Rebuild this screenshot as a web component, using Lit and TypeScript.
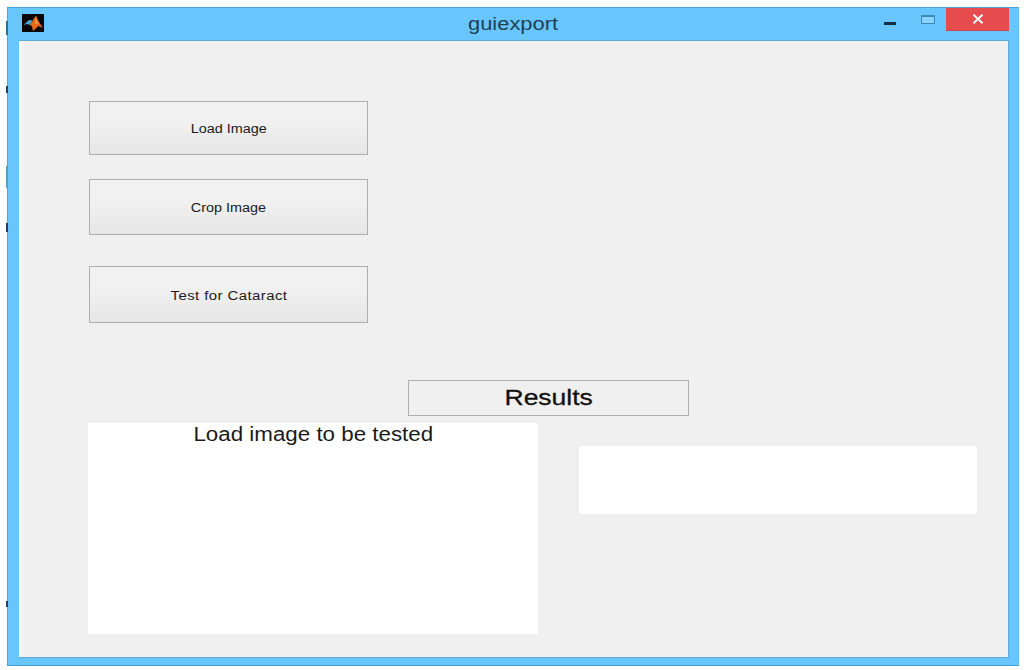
import { LitElement, html, css } from "lit";
import { customElement } from "lit/decorators.js";

@customElement("app-root")
export class AppRoot extends LitElement {
  static styles = css`
    :host {
      display: block;
      width: 1024px;
      height: 670px;
      background: #fff;
      font-family: "Liberation Sans", Arial, sans-serif;
      overflow: hidden;
    }
    .frame {
      box-sizing: border-box;
      width: 1012px;
      height: 659px;
      margin: 7px 0 0 7px;
      background: #69c6fd;
      border: 1px solid #4aa3d6;
      border-left-color: #6d9db8;
      border-right-color: #63bdf3;
      display: flex;
      flex-direction: column;
      position: relative;
    }
    .ticks {
      position: absolute;
      left: -2px;
      top: 0;
      width: 2px;
      height: 600px;
      background: linear-gradient(
        to bottom,
        transparent 13px,
        #2f6c94 13px,
        #2f6c94 27px,
        transparent 27px,
        transparent 78px,
        #2c3a66 78px,
        #2c3a66 85px,
        transparent 85px,
        transparent 158px,
        #5b9cc4 158px,
        #5b9cc4 180px,
        transparent 180px,
        transparent 215px,
        #2c3a66 215px,
        #2c3a66 224px,
        transparent 224px,
        transparent 593px,
        #2c3a66 593px,
        #2c3a66 599px,
        transparent 599px
      );
    }
    .titlebar {
      height: 32px;
      flex: none;
      display: flex;
      align-items: flex-start;
      position: relative;
    }
    .logo {
      width: 22px;
      height: 18px;
      margin: 6px 0 0 14px;
      display: block;
      flex: none;
    }
    .title {
      position: absolute;
      left: 0;
      right: 0;
      top: 6px;
      text-align: center;
      font-size: 18px;
      line-height: 20px;
      color: #1d3f55;
    }
    .wide {
      display: inline-block;
      transform-origin: center;
      transform: scaleX(var(--sx, 1.2));
    }
    .title .wide { --sx: 1.215; }
    .controls {
      margin-left: auto;
      margin-right: 9px;
      display: flex;
      align-items: flex-start;
    }
    .min {
      width: 12px;
      height: 3px;
      background: #12304a;
      margin: 14px 25px 0 0;
    }
    .max {
      box-sizing: border-box;
      width: 14px;
      height: 9px;
      border: 1px solid #3d87b5;
      border-top-width: 2px;
      background: #8ad3fd;
      margin: 7px 11px 0 0;
    }
    .close {
      width: 63px;
      height: 22px;
      background: #e64b4d;
      border-bottom: 1px solid #c24a50;
      display: flex;
      align-items: center;
      justify-content: center;
    }
    .close svg {
      display: block;
      width: 14px;
      height: 10px;
    }
    .client {
      box-sizing: border-box;
      width: 990px;
      height: 618px;
      margin-left: 11px;
      background: #f0f0f0;
      border: 1px solid #5fa9d8;
      border-width: 1px 1px 1px 0;
      box-shadow: inset 4px 0 3px -1px #f8f8f8;
      padding: 60px 0 0 70px;
      display: flex;
      flex-direction: column;
      align-items: flex-start;
    }
    .btn {
      box-sizing: border-box;
      width: 279px;
      padding-top: 1px;
      border: 1px solid #aeaeae;
      background: linear-gradient(#f1f1f1, #f0f0f0 45%, #e6e6e6);
      display: flex;
      align-items: center;
      justify-content: center;
      font-size: 12px;
      color: #1a1a1a;
    }
    .b1 { height: 54px; }
    .b2 { height: 56px; margin-top: 24px; }
    .b3 { height: 57px; margin-top: 31px; padding-top: 2px; letter-spacing: 0.35px; }
    .b3 .wide { --sx: 1.243; }
    .results {
      box-sizing: border-box;
      width: 281px;
      height: 36px;
      margin: 57px 0 0 319px;
      border: 1px solid #aeaeae;
      display: flex;
      align-items: center;
      justify-content: center;
      font-size: 22px;
      color: #111;
      -webkit-text-stroke: 0.3px #111;
    }
    .results .wide { --sx: 1.205; }
    .bottom {
      display: flex;
      align-items: flex-start;
      margin: 7px 0 0 -1px;
    }
    .input {
      width: 450px;
      height: 211px;
      background: #fff;
      text-align: center;
      font-size: 20px;
      line-height: 22px;
      color: #1a1a1a;
    }
    .input .wide { --sx: 1.117; }
    .output {
      width: 398px;
      height: 68px;
      background: #fff;
      margin: 23px 0 0 41px;
    }
  `;

  render() {
    return html`
      <div class="frame">
        <div class="ticks"></div>
        <div class="titlebar">
          <svg class="logo" viewBox="0 0 22 18">
            <rect width="22" height="18" fill="#060606" />
            <path d="M1.5 11 L7 6 L10.5 6.5 L8 11 L5 10 Z" fill="#4fa6cf" />
            <path d="M8 11 L11 6 L14 1.5 L17 8 L21 14 L16.5 12 L11 17 L10 12.5 Z" fill="#e8671d" />
            <path d="M13.5 3.5 L16 9 L13 10.5 Z" fill="#f3a050" />
          </svg>
          <div class="title"><span class="wide">guiexport</span></div>
          <div class="controls">
            <div class="min"></div>
            <div class="max"></div>
            <div class="close">
              <svg viewBox="0 0 14 10"><path d="M2.5 0.8 L11.5 9.2 M11.5 0.8 L2.5 9.2" stroke="#fff" stroke-width="2" fill="none" /></svg>
            </div>
          </div>
        </div>
        <div class="client">
          <div class="btn b1"><span class="wide">Load Image</span></div>
          <div class="btn b2"><span class="wide">Crop Image</span></div>
          <div class="btn b3"><span class="wide">Test for Cataract</span></div>
          <div class="results"><span class="wide">Results</span></div>
          <div class="bottom">
            <div class="input"><span class="wide">Load image to be tested</span></div>
            <div class="output"></div>
          </div>
        </div>
      </div>
    `;
  }
}
